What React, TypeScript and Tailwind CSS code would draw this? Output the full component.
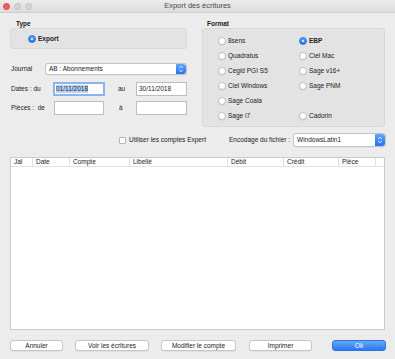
import React from "react";

const font = { fontFamily: '"Liberation Sans", Arial, sans-serif' };

function Radio({ label, checked, bold }: { label: string; checked?: boolean; bold?: boolean }) {
  return (
    <div className="flex items-center h-[15px]">
      {checked ? (
        <div className="w-[8px] h-[8px] rounded-full bg-gradient-to-b from-[#5aa4fa] to-[#2776f0] border border-[#2f73d8] flex items-center justify-center">
          <div className="w-[2px] h-[2px] rounded-full bg-white" />
        </div>
      ) : (
        <div className="w-[8px] h-[8px] rounded-full bg-white border border-[#c2c2c2] shadow-[0_0.5px_0.5px_rgba(0,0,0,0.1)]" />
      )}
      <span className={`ml-[2px] text-[6.5px] leading-[8px] text-[#222] ${bold ? "font-bold" : ""}`}>{label}</span>
    </div>
  );
}

function Stepper() {
  return (
    <div className="w-[10px] h-full rounded-r-[3px] bg-gradient-to-b from-[#60a6fa] to-[#2471ef] flex flex-col items-center justify-center">
      <svg width="6" height="8" viewBox="0 0 6 8">
        <path d="M1.2 3 L3 1.3 L4.8 3" stroke="white" strokeWidth="0.9" fill="none" />
        <path d="M1.2 5 L3 6.7 L4.8 5" stroke="white" strokeWidth="0.9" fill="none" />
      </svg>
    </div>
  );
}

function Select({ value, w }: { value: string; w: string }) {
  return (
    <div className={`${w} h-full flex bg-white border border-[#c4c4c4] rounded-[3px] shadow-[0_0.5px_0.5px_rgba(0,0,0,0.08)]`}>
      <div className="flex-1 flex items-center pl-[3px] text-[6.5px] text-[#222]">{value}</div>
      <Stepper />
    </div>
  );
}

function Input({ value, focused, w }: { value?: string; focused?: boolean; w: string }) {
  return (
    <div
      className={`${w} h-[14px] bg-white flex items-center ${
        focused ? "border-[2px] border-[#8bb3ec] pl-[1px]" : "border border-[#bdbdbd] pl-[2px]"
      }`}
    >
      {value && (
        <span className={`text-[6.5px] leading-[8px] text-[#222] ${focused ? "bg-[#b5d3f8]" : ""}`}>{value}</span>
      )}
    </div>
  );
}

function Btn({ label, w, primary }: { label: string; w: string; primary?: boolean }) {
  return (
    <div
      className={`${w} h-[11px] rounded-[3px] flex items-center justify-center text-[6.5px] ${
        primary
          ? "bg-gradient-to-b from-[#66a9f9] to-[#2a77f0] text-white border border-[#2f74dc]"
          : "bg-white text-[#222] border border-[#c6c6c6] shadow-[0_0.5px_0.5px_rgba(0,0,0,0.1)]"
      }`}
    >
      {label}
    </div>
  );
}

export default function App() {
  const cols: [string, number][] = [
    ["Jal", 22],
    ["Date", 37],
    ["Compte", 60],
    ["Libellé", 98],
    ["Débit", 56],
    ["Crédit", 55],
    ["Pièce", 37],
  ];
  return (
    <div className="w-[395px] h-[359px] bg-[#ececec] flex flex-col overflow-hidden" style={font}>
      {/* Title bar */}
      <div className="h-[13px] flex items-center bg-gradient-to-b from-[#ececec] to-[#dcdcdc] border-b border-[#cdcdcd]">
        <div className="w-[40px] flex items-center gap-[4px] pl-[3px]">
          <div className="w-[7px] h-[7px] rounded-full bg-[#fc5c55] border border-[#e2463f]" />
          <div className="w-[7px] h-[7px] rounded-full bg-[#d3d3d3] border border-[#c4c4c4]" />
          <div className="w-[7px] h-[7px] rounded-full bg-[#d3d3d3] border border-[#c4c4c4]" />
        </div>
        <div className="flex-1 text-center text-[7.5px] text-[#4a4a4a] pr-[40px]">Export des écritures</div>
      </div>

      {/* Top section */}
      <div className="flex pl-[10px] pt-[7px]">
        {/* Left column */}
        <div className="w-[177px] flex flex-col">
          <div className="h-[8px] leading-[8px] pl-[6px] text-[6.5px] font-bold text-[#222]">Type</div>
          <div className="h-[21px] rounded-[3px] bg-[#e3e3e3] border border-[#d9d9d9] flex items-center pl-[17px]">
            <Radio label="Export" checked bold />
          </div>
          <div className="mt-[14px] h-[12px] flex items-center">
            <div className="w-[35px] pl-[1px] text-[6.5px] text-[#222]">Journal</div>
            <Select value="AB : Abonnements" w="w-[142px]" />
          </div>
          <div className="mt-[7px] h-[14px] flex items-center">
            <div className="w-[43px] pl-[1px] text-[6.5px] text-[#222]">Dates : du</div>
            <Input value="01/11/2018" focused w="w-[52px]" />
            <div className="w-[31px] pl-[13px] text-[6.5px] text-[#222]">au</div>
            <Input value="30/11/2018" w="w-[51px]" />
          </div>
          <div className="mt-[5px] h-[14px] flex items-center">
            <div className="w-[44px] pl-[1px] text-[6.5px] text-[#222]">Pièces :&nbsp; de</div>
            <Input w="w-[50px]" />
            <div className="w-[32px] pl-[15px] text-[6.5px] text-[#222]">à</div>
            <Input w="w-[51px]" />
          </div>
        </div>

        {/* Right column */}
        <div className="ml-[15px] w-[183px] flex flex-col">
          <div className="h-[8px] leading-[8px] pl-[5px] text-[6.5px] font-bold text-[#222]">Format</div>
          <div className="h-[99px] rounded-[3px] bg-[#e3e3e3] border border-[#d9d9d9] pt-[4px] pl-[15px] grid grid-cols-[81px_1fr] content-start">
            <Radio label="8sens" />
            <Radio label="EBP" checked bold />
            <Radio label="Quadratus" />
            <Radio label="Ciel Mac" />
            <Radio label="Cegid PGI S5" />
            <Radio label="Sage v16+" />
            <Radio label="Ciel Windows" />
            <Radio label="Sage PNM" />
            <Radio label="Sage Coala" />
            <div className="h-[15px]" />
            <Radio label="Sage i7" />
            <Radio label="Cadorin" />
          </div>
        </div>
      </div>

      {/* Options row */}
      <div className="mt-[6px] h-[14px] flex items-center">
        <div className="ml-[119px] w-[110px] flex items-center">
          <div className="w-[7px] h-[7px] bg-white border border-[#b5b5b5] rounded-[1px]" />
          <span className="ml-[3px] text-[6.5px] text-[#222]">Utiliser les comptes Expert</span>
        </div>
        <div className="w-[64px] text-[6.5px] text-[#222]">Encodage du fichier :</div>
        <Select value="WindowsLatin1" w="w-[93px]" />
      </div>

      {/* Table */}
      <div className="mt-[10px] ml-[10px] w-[375px] h-[173px] bg-white border border-[#cbcbcb] flex flex-col">
        <div className="h-[9px] flex border-b border-[#e2e2e2]">
          {cols.map(([name, w]) => (
            <div
              key={name}
              style={{ width: w }}
              className="h-full border-r border-[#e2e2e2] pl-[3px] flex items-center text-[6.5px] text-[#222]"
            >
              {name}
            </div>
          ))}
          <div className="flex-1" />
        </div>
      </div>

      {/* Buttons */}
      <div className="mt-[10px] ml-[10px] flex items-center">
        <Btn label="Annuler" w="w-[53px]" />
        <div className="ml-[12px]"><Btn label="Voir les écritures" w="w-[74px]" /></div>
        <div className="ml-[12px]"><Btn label="Modifier le compte" w="w-[75px]" /></div>
        <div className="ml-[13px]"><Btn label="Imprimer" w="w-[63px]" /></div>
        <div className="ml-[20px]"><Btn label="Ok" w="w-[54px]" primary /></div>
      </div>
    </div>
  );
}
